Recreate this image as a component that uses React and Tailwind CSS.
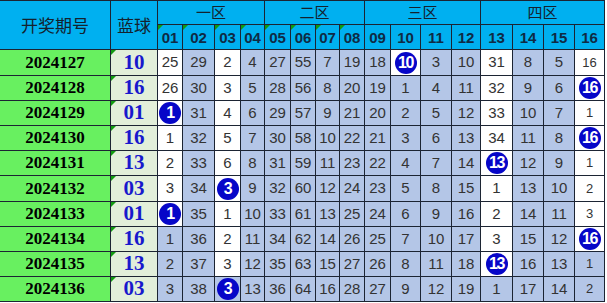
const rows = [
  ["2024127", "10", [25, 29, 2, 4, 27, 55, 7, 19, 18, 10, 3, 10, 31, 8, 5, 16]],
  ["2024128", "16", [26, 30, 3, 5, 28, 56, 8, 20, 19, 1, 4, 11, 32, 9, 6, 16]],
  ["2024129", "01", [1, 31, 4, 6, 29, 57, 9, 21, 20, 2, 5, 12, 33, 10, 7, 1]],
  ["2024130", "16", [1, 32, 5, 7, 30, 58, 10, 22, 21, 3, 6, 13, 34, 11, 8, 16]],
  ["2024131", "13", [2, 33, 6, 8, 31, 59, 11, 23, 22, 4, 7, 14, 13, 12, 9, 1]],
  ["2024132", "03", [3, 34, 3, 9, 32, 60, 12, 24, 23, 5, 8, 15, 1, 13, 10, 2]],
  ["2024133", "01", [1, 35, 1, 10, 33, 61, 13, 25, 24, 6, 9, 16, 2, 14, 11, 3]],
  ["2024134", "16", [1, 36, 2, 11, 34, 62, 14, 26, 25, 7, 10, 17, 3, 15, 12, 16]],
  ["2024135", "13", [2, 37, 3, 12, 35, 63, 15, 27, 26, 8, 11, 18, 13, 16, 13, 1]],
  ["2024136", "03", [3, 38, 3, 13, 36, 64, 16, 28, 27, 9, 12, 19, 1, 17, 14, 2]],
];

const zones = ["一区", "二区", "三区", "四区"];
const nums = ["01", "02", "03", "04", "05", "06", "07", "08", "09", "10", "11", "12", "13", "14", "15", "16"];

// last row in which each column got the ball -> cells above it stay white
const lastBall = {};
rows.forEach((r, i) => {
  lastBall[parseInt(r[1], 10) - 1] = i;
});

const cell = "border-r border-b border-[#1c2433] flex items-center justify-center relative";
const cjk = "font-['Noto_Sans_CJK_SC',sans-serif]";
const serif = "font-['Liberation_Serif',serif]";

function Flag() {
  return (
    <span className="absolute left-0 top-0 w-0 h-0 border-t-[5px] border-r-[5px] border-t-[#119a11] border-r-transparent" />
  );
}

export default function App() {
  return (
    <div className="w-[607px] h-[303px] bg-white overflow-hidden">
      <div className="grid w-[605px] border-t border-[#1c2433] font-['Liberation_Sans',Arial,sans-serif] grid-cols-[111px_47px_25px_32px_26px_24px_26px_25px_24px_25px_26px_30px_31px_29px_32px_31px_31px_30px] grid-rows-[24px_25px_26px_25px_25px_25px_25px_26px_25px_25px_25px_25px]">
        <div className={`${cell} ${cjk} row-span-2 bg-[#00b0f0] text-[17px] text-[#14222e]`}>开奖期号</div>
        <div className={`${cell} ${cjk} row-span-2 bg-[#00b0f0] text-[17px] text-[#14222e]`}>蓝球</div>
        {zones.map((z) => (
          <div key={z} className={`${cell} ${cjk} col-span-4 bg-[#00b0f0] text-[15px] text-[#14222e]`}>
            {z}
          </div>
        ))}
        {nums.map((n, i) => (
          <div key={n} className={`${cell} bg-[#00b0f0] text-[15px] font-bold text-[#0f2a44] pt-[2px]`}>
            {i < 8 && <Flag />}
            {n}
          </div>
        ))}

        {rows.map(([period, blue, vals], ri) => {
          const b = parseInt(blue, 10) - 1;
          return [
            <div key={period} className={`${cell} ${serif} bg-[#68f060] text-[17px] font-bold text-black`}>
              {period}
            </div>,
            <div key={period + "b"} className={`${cell} ${serif} bg-[#e2efda] text-[21px] font-bold text-[#1818cc]`}>
              <Flag />
              {blue}
            </div>,
            ...vals.map((v, ci) => {
              const white = lastBall[ci] !== undefined && ri <= lastBall[ci] && ri < rows.length - 1;
              const isBall = ci === b;
              return (
                <div
                  key={period + ci}
                  className={`${cell} ${white ? "bg-white" : "bg-[#b4c6e7]"} ${
                    ci === 15 ? "text-[13px]" : "text-[15px]"
                  } text-[#333333]`}
                >
                  {isBall ? (
                    <span className="w-[22px] h-[22px] rounded-full bg-[#0606c8] text-white font-bold text-[16px] tracking-[-1.5px] flex items-center justify-center">
                      {v}
                    </span>
                  ) : (
                    v
                  )}
                </div>
              );
            }),
          ];
        })}
      </div>
    </div>
  );
}
